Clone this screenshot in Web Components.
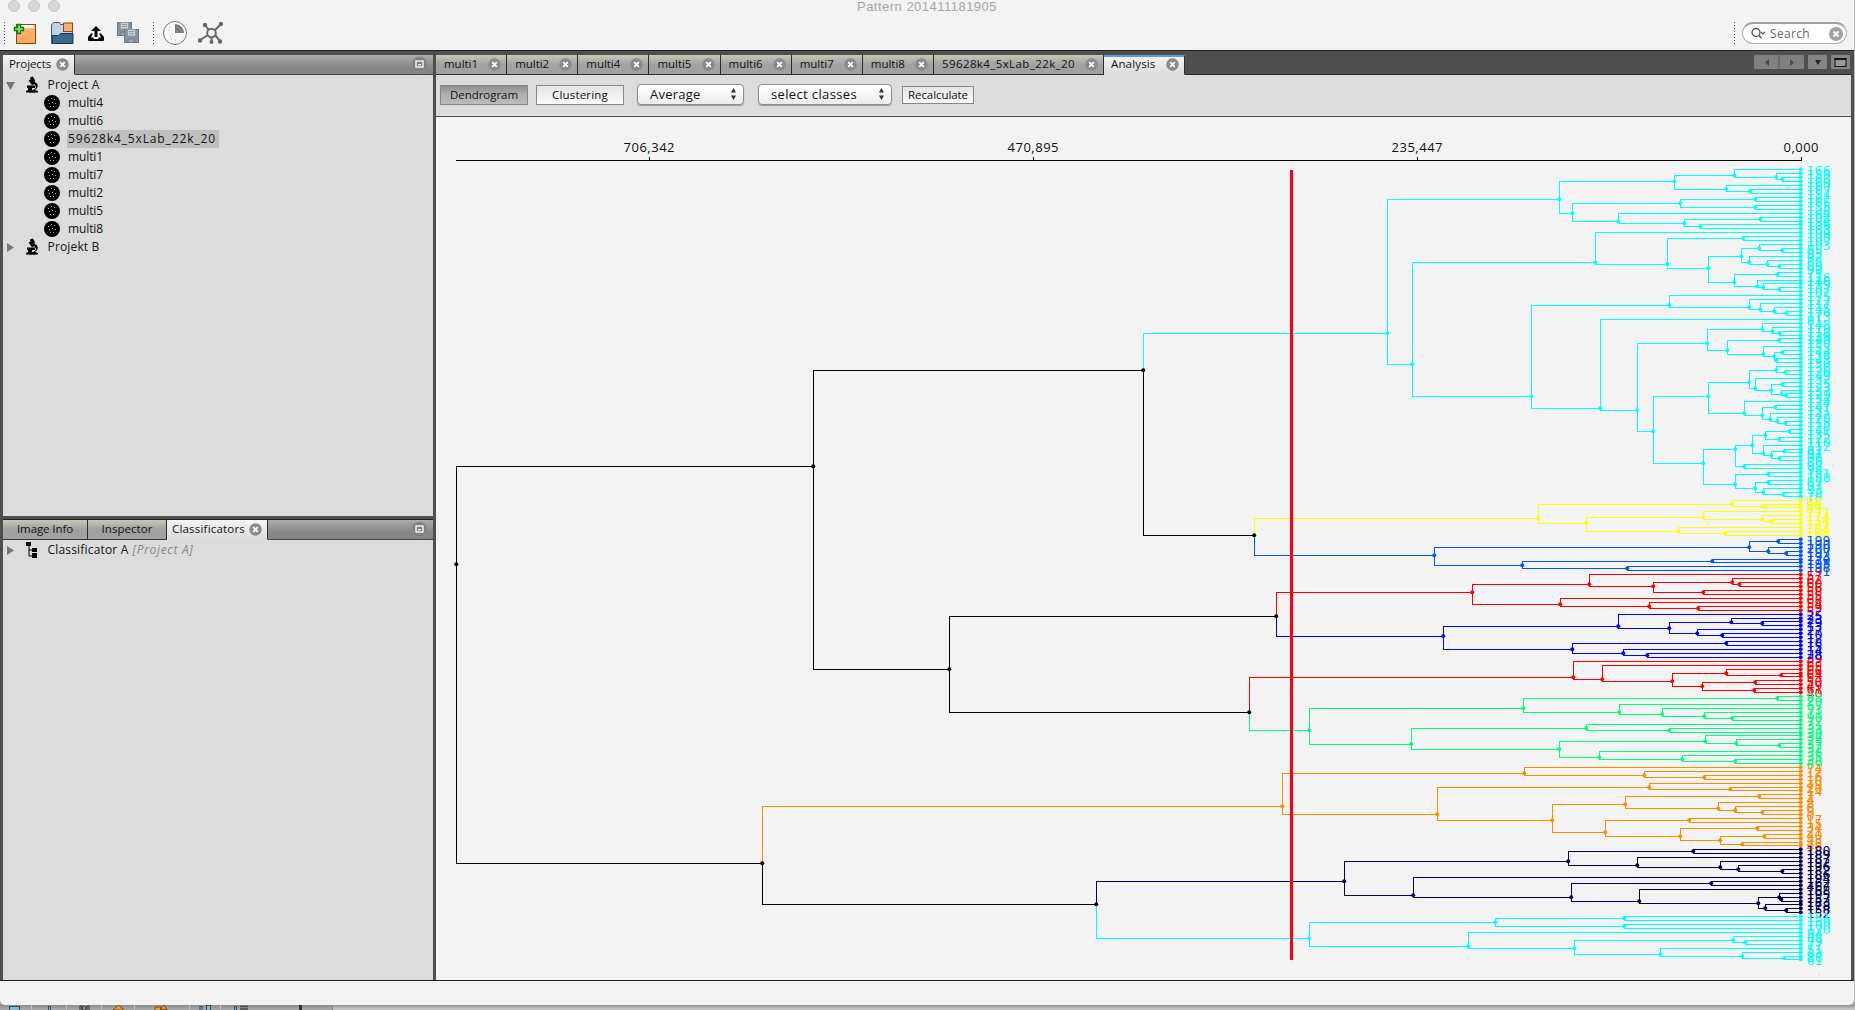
<!DOCTYPE html>
<html lang="en">
<head>
<meta charset="utf-8">
<title>Pattern 201411181905</title>
<style>
html,body{margin:0;height:100%;overflow:hidden;background:#b4b4b4}
body{font-family:"Open Sans","Noto Sans",sans-serif;color:#111}
</style>
</head>
<body>
<pattern-app></pattern-app>
<script>
const define = (name, html, setup) => customElements.define(name, class extends HTMLElement {
  connectedCallback() {
    if (this.shadowRoot) return;
    const root = this.attachShadow({ mode: 'open' });
    root.innerHTML = typeof html === 'function' ? html(this) : html;
    if (setup) setup(this, root);
  }
});

/* text whose tracking is adjusted to a given width */
define('fit-text', '<style>:host{display:inline-block;white-space:pre;flex:none}</style><slot></slot>', el => {
  const w = +el.getAttribute('w');
  const n = el.textContent.length;
  const natural = el.getBoundingClientRect().width;
  el.style.letterSpacing = ((w - natural) / n).toFixed(3) + 'px';
});

define('close-dot', `<style>:host{display:block;width:13px;height:13px;flex:none}svg{display:block}</style>
<svg width="13" height="13"><circle cx="6.5" cy="6.5" r="6.2" fill="#8b8b8b"/><path d="M4.2 4.2l4.6 4.6M8.8 4.2l-4.6 4.6" stroke="#fff" stroke-width="1.8"/></svg>`);

define('min-dot', `<style>:host{display:block;width:17px;height:17px;flex:none}svg{display:block}</style>
<svg width="17" height="17"><circle cx="8.5" cy="8.5" r="7.6" fill="#808080" stroke="#8d8d8d"/><rect x="5" y="5" width="7" height="6" fill="none" stroke="#fff" stroke-width="1.3"/><path d="M7 8.7h3" stroke="#fff" stroke-width="1.2"/></svg>`);

define('view-tab', el => `<style>
:host{display:flex;box-sizing:border-box;height:20px;align-items:center;justify-content:space-between;padding:0 5px 1px 8px;font-size:11.5px;line-height:18px;
 background:linear-gradient(#c6c8b4,#a2a2a2 50%,#a0a0a0);border-right:1px solid #2a2a2a;border-bottom:1px solid #333;flex:none}
:host([active]){background:linear-gradient(#f4f4f4,#dcdcdc);border-bottom-color:#dcdcdc}
:host([blue]){border-top:2px solid #4f9fee;padding-bottom:3px}
:host([plain]){justify-content:center;padding:0 0 1px}
</style><slot></slot>${el.hasAttribute('plain') ? '' : '<close-dot></close-dot>'}`);

define('tree-row', el => {
  const kind = el.getAttribute('kind');
  const icons = {
    scope: '<svg width="20" height="18"><path d="M5 1.500l2.500-1 1 1 1.500 3-.5 1 1 2-3.500 1.800L3.500 4.500 5.500 3.500z"/><path d="M10 6.500c3.500.5 4 5 0 7.500l3 1v1.500H4l-1-2 5-.5c3-.8 4-3.500 1.500-5z"/><path d="M2 9.500h8V12H7v3h3v1.500H1V15l2-1v-2H2z"/></svg>',
    cls: '<svg width="20" height="18"><path d="M1 1h5v4H1zM7 7h5v4H7zM7 12h5v5H7z"/><path d="M4 4v11h4M4 9h4" fill="none" stroke="#000"/></svg>',
    dish: '<svg width="16" height="16"><circle cx="8" cy="8" r="8"/><g fill="#aaa"><rect x="4" y="5" width="1" height="1"/><rect x="7" y="3" width="1" height="1"/><rect x="10" y="4" width="1" height="1"/><rect x="5" y="8" width="1" height="1"/><rect x="8" y="7" width="1" height="1"/><rect x="11" y="8" width="1" height="1"/><rect x="6" y="11" width="1" height="1"/><rect x="9" y="11" width="1" height="1"/></g></svg>'
  };
  const arrow = kind === 'dish' ? '' : el.hasAttribute('open')
    ? '<svg class="a" width="9" height="18"><path d="M0 6h9l-4.500 8z" fill="#777"/></svg>'
    : '<svg class="a" width="9" height="18"><path d="M1 5v9l7-4.500z" fill="#777"/></svg>';
  return `<style>:host{display:flex;height:18px;align-items:center;font-size:12px;line-height:18px;padding-left:${kind === 'dish' ? 41 : 3}px}
  svg{display:block;flex:none}.a{margin-right:10px}.t{margin-left:${kind === 'dish' ? 7 : 1.5}px;padding:0 3px 0 1px;display:flex;gap:4px}
  :host([sel]) .t{background:#bfbfbf}::slotted(i){color:#888}</style>${arrow}${icons[kind]}<span class="t"><slot></slot></span>`;
});

define('push-button', `<style>:host{display:flex;box-sizing:border-box;align-items:center;justify-content:center;font-size:11.5px;border:1px solid #878787;background:linear-gradient(#e4e4e4,#fafafa);height:20px;flex:none}
:host([on]){background:linear-gradient(#8f8f8f,#adadad 45%,#bcbcbc)}</style><slot></slot>`);

define('combo-box', `<style>:host{display:flex;box-sizing:border-box;align-items:center;justify-content:space-between;height:21px;padding:0 6px 1px 12px;font-size:13px;border:1px solid #8e8e8e;border-radius:4px;background:linear-gradient(#fff,#ececec);box-shadow:0 1px 1px #999;flex:none}svg{display:block}</style>
<slot></slot><svg width="7" height="12"><path d="M3.500 0L6 4.500H1zM3.500 12L6 7.500H1z" fill="#333"/></svg>`);

define('window-header', `<style>
:host{display:block;height:50px;background:#f3f3f3;overflow:hidden}
.title{display:flex;height:14px;position:relative}
.lights{display:flex;gap:8px;padding-left:8px}
.lights i{width:10px;height:10px;border:1px solid #c6c6c6;background:#d7d7d7;border-radius:50%}
.lights{align-items:flex-start}
.name{position:absolute;left:857px;top:-1px;font:13px/15px "Liberation Sans",sans-serif;color:#a6a6a6}
.bar{display:flex;height:38px;align-items:center;padding-left:4px}
.grip{width:1px;height:22px;background:repeating-linear-gradient(#555 0 1px,transparent 1px 3px);flex:none}
svg{display:block;flex:none}
.search{display:flex;box-sizing:border-box;align-items:center;width:105px;height:22px;border:1px solid #b0b0b0;border-top:2px solid #a0a0a0;border-radius:11px;background:#fff;margin-left:7px;padding:0 3px 0 8px;font-size:12px;color:#666}
</style>
<div class="title"><div class="lights"><i></i><i></i><i></i></div><fit-text class="name" w="140">Pattern 201411181905</fit-text></div>
<div class="bar"><span class="grip"></span>
<svg width="24" height="24" viewBox="0 0 24 24" style="margin-left:7px"><defs><linearGradient id="o" x2="0" y2="1"><stop stop-color="#ffb676"/><stop offset="1" stop-color="#fca55b"/></linearGradient></defs><rect x="4.500" y="3.500" width="19" height="19" fill="url(#o)" stroke="#8a4a0c"/><rect x="6" y="4" width="16" height="3" fill="#fff2e6"/><path d="M5.500 3.500h3v3h3v3h-3v3h-3v-3h-3v-3h3z" fill="#9be86a" stroke="#0b7a10" stroke-width="1.300"/></svg>
<svg width="24" height="24" viewBox="0 0 24 24" style="margin-left:14px"><path d="M1.500 4l2-2.500h6l1 2h12v19h-21z" fill="#c0d3e6" stroke="#3a5b7c"/><rect x="13.500" y="2" width="9" height="8.500" fill="#f4ae6c" stroke="#8a4a0c"/><path d="M2.500 22.500v-8h6l2-2h12.500v10z" fill="#3d6a8c" stroke="#17384f"/></svg>
<svg width="18" height="18" viewBox="0 0 18 18" style="margin-left:13px;margin-top:2px"><path d="M9 1l5 5h-3.500v6h-3V6H4z"/><path d="M4 8.500L1 12v3q0 1 1 1h14q1 0 1-1v-3l-3-3.500h-2l2 4h-2l-1 1.500H7l-1-1.500H4l2-4z"/></svg>
<svg width="24" height="24" viewBox="0 0 24 24" style="margin-left:11px"><g stroke="#6d7b87"><rect x="1.500" y="1.500" width="14" height="13" fill="#84929e"/><path d="M4.500 1.500h8v6.500h-8z" fill="#c9cdd0" stroke="#909aa2"/><path d="M5 11h6v3.500H5z" fill="#a5a9ab"/><rect x="8.500" y="8.500" width="14" height="13" fill="#84929e"/><path d="M11.500 8.500h8v6.500h-8z" fill="#c9cdd0" stroke="#909aa2"/><path d="M12 18h6v3.500h-6z" fill="#a5a9ab"/></g><path d="M6 3.500h5M6 5.500h5M13 10.500h5M13 12.500h5" stroke="#999"/></svg>
<span class="grip" style="margin-left:13px"></span>
<svg width="26" height="26" viewBox="0 0 26 26" style="margin-left:8px"><circle cx="13" cy="13" r="11.500" fill="#f8f8f8" stroke="#777"/><path d="M13 13V4a9 9 0 0 1 9 9z" fill="#777"/><path d="M14 10a3 3 0 0 1 2 3M14 7a6 6 0 0 1 5 6" stroke="#aaa" fill="none" stroke-width=".6"/><path d="M7 7h1M6 10h1M8 17h1M10 14h1M9 19h1M13 20h1M20 17h1" stroke="#aaa"/></svg>
<svg width="26" height="24" viewBox="0 0 26 24" style="margin-left:10px"><g stroke="#686868" stroke-width="2" fill="none"><circle cx="13.500" cy="12" r="4.300"/><path d="M7 4l4 5M23 3l-6 6M17 14l5 6M10 14l-8 5M13.500 16v4"/></g><g fill="#686868"><circle cx="7" cy="4" r="2.200"/><circle cx="23" cy="3" r="2.200"/><circle cx="22" cy="20.500" r="2.200"/><circle cx="2" cy="19.500" r="2.200"/><circle cx="13.500" cy="21" r="2"/></g></svg>
<span class="grip" style="margin-left:auto"></span>
<div class="search"><svg width="14" height="14" viewBox="0 0 14 14" style="margin-right:5px"><circle cx="5" cy="5.500" r="4" fill="none" stroke="#555" stroke-width="1.300"/><path d="M8 8.500l2.500 3M10 5l2 2 2-2" fill="none" stroke="#555" stroke-width="1.200"/></svg><fit-text w="40">Search</fit-text>
<svg width="14" height="14" style="margin-left:auto"><circle cx="7" cy="7" r="7" fill="#a3a3a3"/><path d="M4.500 4.500l5 5M9.500 4.500l-5 5" stroke="#fff" stroke-width="1.800"/></svg></div>
<span style="width:7px;flex:none"></span></div>`);

define('side-panels', `<style>
:host{display:flex;flex-direction:column;width:430px;flex:none}
.head{display:flex;height:20px;background:linear-gradient(#acacac,#888 60%,#858585);box-shadow:inset 0 -1px #444}
.head min-dot{margin:1px 5px 0 auto}
.tree{background:#dcdcdc}
.top{height:441px;box-sizing:border-box;padding-top:1px}.gap{height:4px;background:linear-gradient(#4f4f4f 3px,#222 3px)}
.bot{flex:1;padding-top:1px}
</style>
<div class="head"><view-tab active style="width:72px;padding-left:6px"><fit-text w="42">Projects</fit-text></view-tab><min-dot></min-dot></div>
<div class="tree top">
<tree-row kind="scope" open><fit-text w="52">Project A</fit-text></tree-row>
<tree-row kind="dish"><fit-text w="35">multi4</fit-text></tree-row>
<tree-row kind="dish"><fit-text w="35">multi6</fit-text></tree-row>
<tree-row kind="dish" sel><fit-text w="148">59628k4_5xLab_22k_20</fit-text></tree-row>
<tree-row kind="dish"><fit-text w="35">multi1</fit-text></tree-row>
<tree-row kind="dish"><fit-text w="35">multi7</fit-text></tree-row>
<tree-row kind="dish"><fit-text w="35">multi2</fit-text></tree-row>
<tree-row kind="dish"><fit-text w="35">multi5</fit-text></tree-row>
<tree-row kind="dish"><fit-text w="35">multi8</fit-text></tree-row>
<tree-row kind="scope"><fit-text w="52">Projekt B</fit-text></tree-row>
</div>
<div class="gap"></div>
<div class="head"><view-tab plain style="width:85px"><fit-text w="56">Image Info</fit-text></view-tab><view-tab plain style="width:79px"><fit-text w="51">Inspector</fit-text></view-tab><view-tab active style="width:101px;padding-left:5px"><fit-text w="73">Classificators</fit-text></view-tab><min-dot></min-dot></div>
<div class="tree bot"><tree-row kind="cls"><fit-text w="81">Classificator A</fit-text><i><fit-text w="61">[Project A]</fit-text></i></tree-row></div>`);

define('dendro-view', '<style>:host{display:block;flex:1;background:#f3f3f3;overflow:hidden}svg{display:block}text{font-family:"Open Sans",sans-serif;font-size:13px}.n{font-family:"DejaVu Sans",sans-serif;font-size:12.5px}</style><svg width="1415" height="863" viewBox="436 117 1415 863"></svg>', (el, root) => {
  const _ = null, p = [];
  const a = (x, l, r) => ({ x: 1370 + Math.floor(x / 3), l, r });
  const b = (x, l, r) => ({ x: 1230 + Math.floor(x * 0.3986 + 0.3), l, r });
  const k = (x, l, r) => ({ x, l, r, c: '#000' });
  const col = (c, n) => (n.c = c, n);
  const cyan = a(52,
    a(567, a(912, a(1092, _, a(1218, _, a(1236, _, _))), a(1068, _, a(1140, _, _))),
      a(606, a(930, a(1155, _, _), a(1155, _, _)), a(744, _, a(942, a(1170, _, _), a(990, _, _))))),
    a(126,
      a(675, _, a(891, a(1119, _, _), a(1014,
        a(1113, a(1167, _, a(1236, _, _)), a(1137, _, a(1191, _, a(1227, _, _)))),
        a(1092, a(1221, _, _), a(1161, _, a(1179, _, a(1227, _, _))))))),
      a(484, a(897, _, a(1137, _, a(1170, _, a(1212, _, a(1248, _, _))))),
        a(690, _, a(801,
          a(1012, a(1176, _, a(1206, _, a(1227, _, _))), a(1072, a(1227, _, _), a(1179, _, a(1212, a(1236, _, _), a(1218, _, _))))),
          a(849,
            a(1014,
              a(1137, a(1218, _, a(1245, _, _)), a(1155, _, a(1203, a(1236, _, _), a(1233, _, a(1248, _, _))))),
              a(1122, _, a(1176, a(1215, _, _), a(1200, _, a(1221, _, a(1245, _, _)))))),
            a(1000,
              a(1095, a(1146, a(1185, a(1257, _, _), a(1227, _, _)), a(1179, _, a(1203, a(1242, _, _), a(1227, _, _)))), a(1122, _, _)),
              a(1095, a(1194, _, _), a(1155, a(1194, _, _), a(1179, _, a(1239, _, _)))))))))));
  const yellow = a(505, a(1086, _, a(1179, _, _)), a(649, a(1000, _, a(1176, _, a(1203, _, _))), a(924, _, a(1065, _, _))));
  const azure = a(193, a(1137, a(1224, _, _), a(1194, _, a(1248, _, _))), a(457, a(1026, _, _), a(771, _, _)));
  const red = a(307, a(657, _, a(849, a(1086, _, a(1107, _, _)), a(1000, _, _))), a(571, _, a(837, _, a(984, _, _))));
  const blue = a(220, a(744, _, a(897, a(1083, _, a(1176, _, _)), a(982, _, a(1056, _, _)))), a(606, a(1068, _, _), a(759, _, a(831, _, _))));
  const red2 = b(861, _, b(933, _, b(1109, b(1245, _, b(1382, _, _)), b(1185, b(1317, _, _), b(1315, _, _)))));
  const green = b(198, b(735, b(1372, _, _), b(976, _, b(1084, _, b(1190, _, b(1260, _, _))))),
    b(454, b(893, _, b(1102, _, _)), b(826, b(1192, _, b(1269, _, b(1378, _, _))), b(926, _, b(1134, _, b(1268, _, _))))));
  const orange = b(131, b(738, _, b(1039, _, b(1190, _, _))), b(519, b(1051, _, b(1254, _, _)),
    b(808, b(991, b(1327, _, _), b(1225, _, b(1268, _, b(1335, _, _)))), b(941, b(1152, _, _), b(1129, b(1323, _, _), b(1230, b(1340, _, _), b(1285, _, _)))))));
  const navy = b(286, b(848, b(1162, _, _), b(1021, _, b(1230, _, b(1274, _, b(1385, _, _))))),
    b(459, _, b(856, b(1207, _, _), b(1026, _, b(1325, b(1378, _, b(1383, _, _)), b(1342, _, b(1395, _, _)))))));
  const aqua = b(198, b(665, b(989, _, _), b(989, _, _)), b(597, _, b(864, b(1262, _, b(1293, _, _)), b(1079, _, b(1285, _, b(1390, _, _))))));
  const tree = k(456,
    k(813, k(1143, col('#00ffff', cyan), k(1254, col('#ffff00', yellow), col('#0055ff', azure))),
      k(949, k(1276, col('#ff0000', red), col('#0000ff', blue)), k(1249, col('#ff0000', red2), col('#00ff80', green)))),
    k(762, col('#ff8c00', orange), k(1096, col('#00005a', navy), col('#00ffff', aqua))));
  const labels = [
    '166 159 168 169 160 167 154 161 165 155 108 164 104 156 106 163 109 100 107 103 85 95 92 80 89 99 75 116 146 119 107 102 175 127 117 145 176 173 81 148 119 118 139 140 130 153 144 138 143 150 136 126 149 132 125 123 137 129 134 124 147 131 142 120 115 128 141 135 122 110 112 82 91 96 86 98 94 181 188 87 97 93 78 76',
    '98 90 83 177 174 114 171 184 113 185',
    '199 190 200 197 193 179 195 198 191',
    '57 62 60 56 58 55 68 54 59 52',
    '25 23 29 13 27 10 12 18 15 14 28 39',
    '63 65 66 64 53 50 49 61 40',
    '83 70 67 73 71 90 72 31 33 30 34 24 37 32 36 35 38 69',
    '74 17 16 10 49 20 14 7 4 8 6 9 0 17 15 34 21 40 43 45 46',
    '180 189 187 192 196 182 186 194 162 467 168 195 157 183 178 158 152',
    '151 150 100 170 84 88 79 77 51 63 88 61'
  ].join(' ').split(' ');
  const line = (x1, y1, x2, y2, c) => {
    const h = y1 === y2;
    p.push(`<rect x="${Math.min(x1, x2)}" y="${Math.min(y1, y2)}" width="${h ? Math.abs(x2 - x1) + 1 : 1}" height="${h ? 1 : Math.abs(y2 - y1) + 1}" fill="${c}"/>`);
  };
  let i = 0;
  const lay = (n, c) => {
    if (!n) {
      const y = 169 + Math.ceil(i * 3.9303 - 0.03);
      return { x: 1800, y, f: y, e: y, c, leaf: true, t: labels[i++] };
    }
    const own = n.c || c, kc = own === '#000' ? undefined : own;
    const L = lay(n.l, kc), R = lay(n.r, kc);
    return { x: n.x, y: Math.ceil((L.f + R.e) / 2), f: L.f, e: R.e, c: own, L, R };
  };
  const draw = n => {
    if (n.leaf) {
      p.push(`<circle cx="1800.700" cy="${n.y + 0.3}" r="2" fill="${n.c}"/><text class="n" x="1806.500" y="${n.y + 5.5}" textLength="${n.t.length * 8}" fill="${n.c}">${n.t}</text>`);
      return;
    }
    for (const ch of [n.L, n.R]) {
      line(n.x, n.y, n.x, ch.y, ch.c);
      line(n.x, ch.y, ch.x, ch.y, ch.c);
      draw(ch);
    }
    p.push(`<circle cx="${n.x + 0.2}" cy="${n.y + 0.2}" r="2" fill="${n.c}"/>`);
  };
  draw(lay(tree));
  line(456, 160, 1801, 160, '#000');
  for (const [x, t, w] of [[649, '706,342', 51], [1033, '470,895', 51], [1417, '235,447', 51], [1801, '0,000', 35]]) {
    line(x, 157, x, 160, '#000');
    p.push(`<text x="${x - w / 2}" y="152" textLength="${w}" fill="#111">${t}</text>`);
  }
  p.push('<rect x="1290" y="170" width="3" height="790" fill="#fb0010"/>');
  root.querySelector('svg').innerHTML = p.join('');
});

define('editor-area', `<style>
:host{display:flex;flex-direction:column;width:1415px;flex:none}
.tabs{display:flex;height:20px;background:#4f4f4f;box-shadow:inset 0 -1px #252525}
.tabs view-tab{width:71.150px}
.nav{margin-left:auto;display:flex;margin-right:1px;gap:4px}
.nav svg{display:block}
.tools{display:flex;height:41px;box-sizing:border-box;background:#dcdcdc;padding-left:4px;align-items:center;padding-bottom:2px}
.line{height:1px;background:#505050}
</style>
<div class="tabs">
${[1, 2, 4, 5, 6, 7, 8].map(n => `<view-tab><fit-text w="34">multi${n}</fit-text></view-tab>`).join('')}
<view-tab style="width:170px"><fit-text w="133">59628k4_5xLab_22k_20</fit-text></view-tab>
<view-tab active blue style="width:81.500px;padding-left:7px"><fit-text w="44.500">Analysis</fit-text></view-tab>
<div class="nav">
<svg width="50" height="14"><rect width="50" height="14" rx="1" fill="#808080"/><path d="M25 0v14" stroke="#5a5a5a"/><path d="M15 4v7l-4-3.500zM36 4v7l4-3.500z" fill="#484848"/></svg>
<svg width="19" height="14"><rect width="19" height="14" rx="1" fill="#858585"/><path d="M7 5h6l-3 5z" fill="#222"/></svg>
<svg width="19" height="14"><rect width="19" height="14" rx="1" fill="#858585"/><rect x="4" y="3.500" width="11" height="8" fill="#999" stroke="#111"/><path d="M3.500 4h12" stroke="#111" stroke-width="2"/></svg>
</div></div>
<div class="tools">
<push-button on style="width:88px"><fit-text w="68">Dendrogram</fit-text></push-button>
<push-button style="width:88px;margin-left:8px"><fit-text w="56">Clustering</fit-text></push-button>
<combo-box style="width:107px;margin-left:13px"><fit-text w="50.500">Average</fit-text></combo-box>
<combo-box style="width:134px;margin-left:14px"><fit-text w="86">select classes</fit-text></combo-box>
<push-button style="width:72px;height:18px;margin-left:10px"><fit-text w="60">Recalculate</fit-text></push-button>
</div>
<div class="line"></div>
<dendro-view></dendro-view>`);

define('dock-strip', `<style>:host{display:flex;height:5px;background:linear-gradient(#909090,#c6c6c6 4px)}.s{width:332px;background:linear-gradient(#8a8a8a,#acacac);border-right:1px solid #888}svg{display:block}</style>
<div class="s"><svg width="332" height="5"><g fill="#8cb8d4" stroke="#2c4a60"><rect x="9.500" y="1.500" width="10" height="5"/><rect x="48.500" y="1.500" width="2" height="5"/><rect x="200" y="1.500" width="2" height="5"/><rect x="206.500" y="0.500" width="4" height="6"/><rect x="234.500" y="1.500" width="2" height="5"/></g><path d="M113 5l5.500-5 5.500 5zM155 2h6v4h-6zM160 4l4-4 3 5z" fill="#e0a040" stroke="#7c4a10"/><path d="M80 5V1h2v4M87 5V1h2v4" stroke="#333" fill="none"/><circle cx="84" cy="3" r="2" fill="none" stroke="#333"/><path d="M240 1.500h8M240 4h8" stroke="#444" stroke-width="1.500"/><path d="M300.500 0v5" stroke="#333" stroke-width="3"/><path d="M31.500 0v5M66.500 0v5M101.500 0v5M134.500 0v5M189.500 0v5M220.500 0v5" stroke="#c0c0c0"/></svg></div>`);

define('pattern-app', `<style>
:host{display:flex;flex-direction:column;height:1010px;width:1855px;background:linear-gradient(90deg,#999 0 1854px,#b5b5b5 1854px)}
.win{width:1854px;height:1005px;display:flex;flex-direction:column;background:#f3f3f3;border-radius:0 0 5px 5px;overflow:hidden}
.work{display:flex;box-sizing:border-box;height:931px;background:#4f4f4f;border-top:1px solid #222;border-bottom:1px solid #222;padding:4px 3px 0;gap:3px;box-shadow:inset 0 4px #4f4f4f}
</style>
<div class="win"><window-header></window-header><div class="work"><side-panels></side-panels><editor-area></editor-area></div></div>
<dock-strip></dock-strip>`);
</script>
</body>
</html>
